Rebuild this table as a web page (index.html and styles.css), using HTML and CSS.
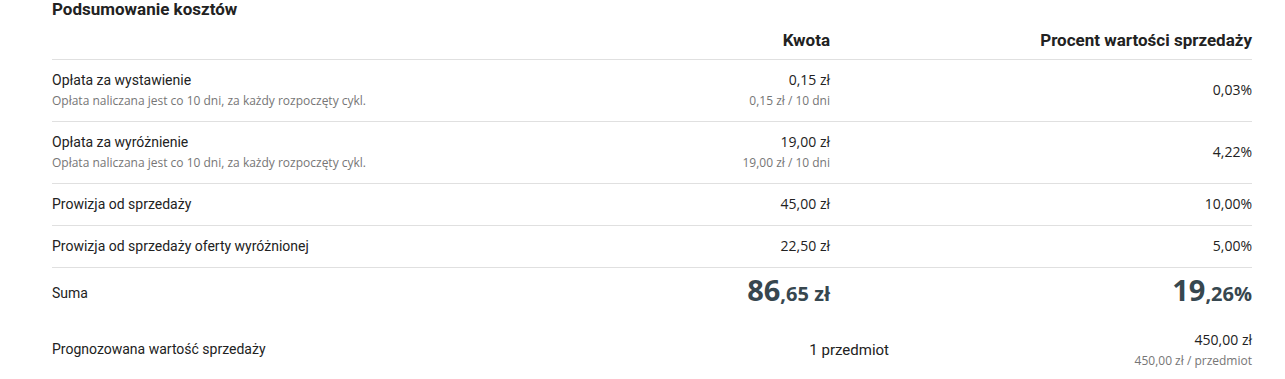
FILE: index.html
```html
<!DOCTYPE html>
<html lang="pl">
<head>
<meta charset="utf-8">
<title>Podsumowanie kosztów</title>
<link rel="stylesheet" href="styles.css">
</head>
<body>
<div class="summary">
  <h2 class="title">Podsumowanie kosztów</h2>
  <div class="table">
    <div class="row head">
      <div></div>
      <div class="amt">Kwota</div>
      <div class="pct">Procent wartości sprzedaży</div>
    </div>
    <div class="row">
      <div class="label">
        <div class="name">Opłata za wystawienie</div>
        <div class="sub">Opłata naliczana jest co 10 dni, za każdy rozpoczęty cykl.</div>
      </div>
      <div class="amt">
        <div class="val">0,15 zł</div>
        <div class="sub">0,15 zł / 10 dni</div>
      </div>
      <div class="pct val">0,03%</div>
    </div>
    <div class="row">
      <div class="label">
        <div class="name">Opłata za wyróżnienie</div>
        <div class="sub">Opłata naliczana jest co 10 dni, za każdy rozpoczęty cykl.</div>
      </div>
      <div class="amt">
        <div class="val">19,00 zł</div>
        <div class="sub">19,00 zł / 10 dni</div>
      </div>
      <div class="pct val">4,22%</div>
    </div>
    <div class="row">
      <div class="label"><div class="name">Prowizja od sprzedaży</div></div>
      <div class="amt val">45,00 zł</div>
      <div class="pct val">10,00%</div>
    </div>
    <div class="row">
      <div class="label"><div class="name">Prowizja od sprzedaży oferty wyróżnionej</div></div>
      <div class="amt val">22,50 zł</div>
      <div class="pct val">5,00%</div>
    </div>
    <div class="row total">
      <div class="label"><div class="name">Suma</div></div>
      <div class="amt big"><span class="big-int">86</span><span class="big-dec">,65 zł</span></div>
      <div class="pct big"><span class="big-int">19</span><span class="big-dec">,26%</span></div>
    </div>
    <div class="row forecast">
      <div class="label"><div class="name">Prognozowana wartość sprzedaży</div></div>
      <div class="amt count">1 przedmiot</div>
      <div class="pct">
        <div class="val">450,00 zł</div>
        <div class="sub">450,00 zł / przedmiot</div>
      </div>
    </div>
  </div>
</div>
</body>
</html>
```
FILE: styles.css
```css
html, body {
  margin: 0;
  padding: 0;
  background: #ffffff;
}

body {
  font-family: Roboto, "Open Sans", sans-serif;
  color: #222222;
}

.summary {
  width: 1200px;
  margin-left: 52px;
}

.title {
  margin: 0;
  font-family: Roboto, sans-serif;
  font-weight: 700;
  font-size: 17px;
  line-height: 19px;
  color: #222222;
}

.row {
  display: grid;
  grid-template-columns: 578px 200px 422px;
  align-items: center;
  padding: 10px 0 11px;
  border-bottom: 1px solid #e0e0e0;
}

.row.head {
  padding: 11px 0 9px;
  font-family: Roboto, sans-serif;
  font-weight: 700;
  font-size: 17px;
  line-height: 20px;
}

.amt, .pct {
  text-align: right;
}

.name {
  font-family: Roboto, sans-serif;
  font-size: 14px;
  line-height: 20px;
  color: #222222;
}

.count {
  font-family: Roboto, sans-serif;
  font-size: 15px;
  line-height: 20px;
  color: #222222;
}

.val {
  font-family: "Open Sans", sans-serif;
  font-size: 14px;
  line-height: 20px;
  color: #222222;
}

.sub {
  margin-top: 2px;
  font-family: "Open Sans", sans-serif;
  font-size: 12px;
  line-height: 18px;
  color: #767676;
}

.row.total {
  border-bottom: none;
  padding: 2px 0 5px;
}

.big {
  font-family: "Open Sans", sans-serif;
  font-weight: 700;
  color: #37474f;
  line-height: 40px;
}

.big-int {
  font-size: 29px;
}

.big-dec {
  font-size: 20px;
}

.row.forecast {
  grid-template-columns: 637px 200px 363px;
  border-bottom: none;
}

.row.forecast .label {
  padding-bottom: 3px;
}
```
